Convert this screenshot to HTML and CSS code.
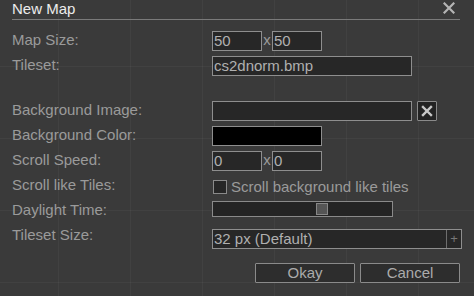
FILE: index.html
```
<!DOCTYPE html>
<html>
<head>
<meta charset="utf-8">
<link rel="stylesheet" href="styles.css">
</head>
<body>
<div class="dialog">
  <div class="titlebar">
    <span class="title">New Map</span>
    <svg class="close" width="12" height="12" viewBox="0 0 12 12"><path d="M1.5 1.5 L10.5 10.5 M10.5 1.5 L1.5 10.5" stroke="#b4b4b4" stroke-width="2.2" stroke-linecap="square"/></svg>
  </div>
  <div class="form first">
    <div class="label">Map Size:</div>
    <div class="ctrl"><div class="field small">50</div><span class="times">x</span><div class="field small">50</div></div>
    <div class="label">Tileset:</div>
    <div class="ctrl"><div class="field wide">cs2dnorm.bmp</div></div>
  </div>
  <div class="form second">
    <div class="label">Background Image:</div>
    <div class="ctrl"><div class="field wide"></div><div class="xbtn"><svg width="12" height="12" viewBox="0 0 12 12"><path d="M2 2 L10 10 M10 2 L2 10" stroke="#c8c8c8" stroke-width="2.4" stroke-linecap="square"/></svg></div></div>
    <div class="label">Background Color:</div>
    <div class="ctrl"><div class="field color"></div></div>
    <div class="label">Scroll Speed:</div>
    <div class="ctrl"><div class="field small">0</div><span class="times">x</span><div class="field small">0</div></div>
    <div class="label">Scroll like Tiles:</div>
    <div class="ctrl check-row"><div class="checkbox"></div><span class="check-text">Scroll background like tiles</span></div>
    <div class="label">Daylight Time:</div>
    <div class="ctrl"><div class="slider"><div class="thumb"></div></div></div>
    <div class="label">Tileset Size:</div>
    <div class="ctrl"><div class="dropdown"><span class="dd-text">32 px (Default)</span><span class="dd-btn">+</span></div></div>
  </div>
  <div class="footer">
    <div class="button">Okay</div>
    <div class="button">Cancel</div>
  </div>
</div>
</body>
</html>
```

FILE: styles.css
```
html, body {
  margin: 0;
  padding: 0;
  width: 474px;
  height: 296px;
  overflow: hidden;
}
body {
  background-color: #3a3a3a;
  background-image:
    linear-gradient(to right, rgba(255,255,255,0.035) 1px, transparent 1px),
    linear-gradient(to bottom, rgba(255,255,255,0.035) 1px, transparent 1px);
  background-size: 72px 72px;
  background-position: 58px 66px;
  font-family: "Liberation Sans", Arial, sans-serif;
  font-size: 15px;
  color: #9a9a9a;
}
.dialog {
  width: 448px;
  padding-left: 12px;
}
.titlebar {
  height: 19px;
  border-bottom: 1px solid #7a7a7a;
  display: flex;
  justify-content: space-between;
  align-items: flex-start;
}
.title {
  line-height: 18px;
  color: #ececec;
}
.close {
  margin-top: 2px;
  margin-right: 5px;
}
.form {
  display: grid;
  grid-template-columns: 200px 250px;
  grid-auto-rows: 20px;
  row-gap: 5px;
}
.form.first { margin-top: 11px; }
.form.second { margin-top: 25px; }
.label {
  line-height: 18px;
  align-self: start;
}
.ctrl {
  display: flex;
  align-items: flex-start;
}
.field {
  box-sizing: border-box;
  height: 20px;
  border: 1px solid #8e8e8e;
  background: #272727;
  color: #b0b0b0;
  line-height: 18px;
  padding-left: 1px;
  white-space: nowrap;
}
.field.small { width: 50px; }
.field.wide { width: 200px; }
.field.color { width: 110px; background: #000; }
.times {
  width: 10px;
  text-align: center;
  line-height: 18px;
  color: #9a9a9a;
}
.xbtn {
  box-sizing: border-box;
  width: 20px;
  height: 20px;
  margin-left: 5px;
  border: 1px solid #8a8a8a;
  border-radius: 1px;
  background: #232323;
  display: flex;
  align-items: center;
  justify-content: center;
}
.check-row { align-items: center; height: 20px; padding-top: 1px; }
.checkbox {
  box-sizing: border-box;
  width: 14px;
  height: 14px;
  margin-left: 1px;
  border: 1px solid #8a8a8a;
  background: #262626;
}
.check-text {
  margin-left: 4px;
  line-height: 18px;
  color: #9a9a9a;
}
.slider {
  box-sizing: border-box;
  width: 181px;
  height: 16px;
  border: 1px solid #8a8a8a;
  background: #242424;
  display: flex;
  align-items: center;
  padding-left: 103px;
}
.thumb {
  box-sizing: border-box;
  width: 12px;
  height: 12px;
  background: #555;
  border: 1px solid #888;
}
.dropdown {
  box-sizing: border-box;
  width: 250px;
  height: 20px;
  margin-top: 3px;
  border: 1px solid #8e8e8e;
  background: #272727;
  display: flex;
  line-height: 18px;
  color: #b0b0b0;
}
.dd-text { flex: 1; padding-left: 1px; }
.dd-btn {
  width: 14px;
  border-left: 1px solid #6e6e6e;
  text-align: center;
  color: #777;
  font-size: 13px;
}
.footer {
  display: flex;
  justify-content: flex-end;
  gap: 5px;
  margin-top: 17px;
}
.button {
  box-sizing: border-box;
  width: 100px;
  height: 20px;
  border: 1px solid #8a8a8a;
  border-radius: 1px;
  background: #2d2d2d;
  color: #ababab;
  text-align: center;
  line-height: 18px;
}
```
